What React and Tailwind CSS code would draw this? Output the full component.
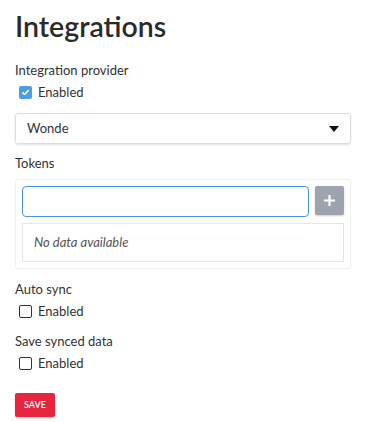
import React from 'react';

function Check({ checked }) {
  if (checked) {
    return (
      <span className="flex h-[13px] w-[13px] items-center justify-center rounded-[2px] bg-[#4a9fe0]">
        <svg className="h-[9px] w-[9px]" viewBox="0 0 12 12" fill="none" stroke="white" strokeWidth={2} strokeLinecap="round" strokeLinejoin="round">
          <path d="M2.5 6.5l2.3 2.2L9.5 3.5" />
        </svg>
      </span>
    );
  }
  return <span className="block h-[13px] w-[13px] rounded-[2px] border-[1.5px] border-[#333]" />;
}

function Toggle({ label, checked }) {
  return (
    <div>
      <div className="text-[13px] leading-[18px] text-[#333]">{label}</div>
      <label className="mt-[4px] flex items-center gap-[6px] pl-[4px] text-[13px] leading-[18px] text-[#333]">
        <Check checked={checked} />
        <span>Enabled</span>
      </label>
    </div>
  );
}

export default function App() {
  return (
    <div className="min-h-[422px] bg-white pl-[15px] pr-[20px] pt-[8px] font-['Lato',sans-serif] text-[#333]">
      <h1 className="text-[28.5px] font-semibold leading-[36px] text-[#2b2b2b]">Integrations</h1>

      <div className="mt-[17px]">
        <Toggle label="Integration provider" checked />
      </div>

      <div className="mt-[12px] flex h-[31px] items-center justify-between rounded-[3px] border border-[#ddd] px-[11px] text-[13px] shadow-[0_1px_2px_rgba(0,0,0,0.12)]">
        <span>Wonde</span>
        <svg className="h-[6px] w-[10px]" viewBox="0 0 10 6">
          <path d="M0 0h10L5 6z" fill="#111" />
        </svg>
      </div>

      <div className="mt-[10px] text-[13px] leading-[18px]">Tokens</div>

      <div className="mt-[7px] rounded-[3px] border border-[#eee] p-[6px]">
        <div className="flex gap-[6px]">
          <input className="h-[31px] flex-1 rounded-[4px] border-[1.5px] border-[#4a90e2] px-2 text-[13px] outline-none" />
          <button className="flex h-[29px] w-[29px] items-center justify-center rounded-[2px] bg-[#9ea3ad] text-white shadow-[0_1px_2px_rgba(0,0,0,0.2)]">
            <svg className="h-[11px] w-[11px]" viewBox="0 0 12 12" stroke="white" strokeWidth={2.4}>
              <path d="M6 0v12M0 6h12" />
            </svg>
          </button>
        </div>
        <div className="mt-[6px] flex h-[39px] items-center border border-[#e6e6e6] px-[11px] text-[13px] italic text-[#555]">
          No data available
        </div>
      </div>

      <div className="mt-[11px]">
        <Toggle label="Auto sync" />
      </div>
      <div className="mt-[12px]">
        <Toggle label="Save synced data" />
      </div>

      <button className="mt-[21px] h-[24px] rounded-[2px] bg-[#e8253f] px-[9px] text-[9px] font-semibold text-white shadow-[0_1px_2px_rgba(0,0,0,0.2)]">
        SAVE
      </button>
    </div>
  );
}
